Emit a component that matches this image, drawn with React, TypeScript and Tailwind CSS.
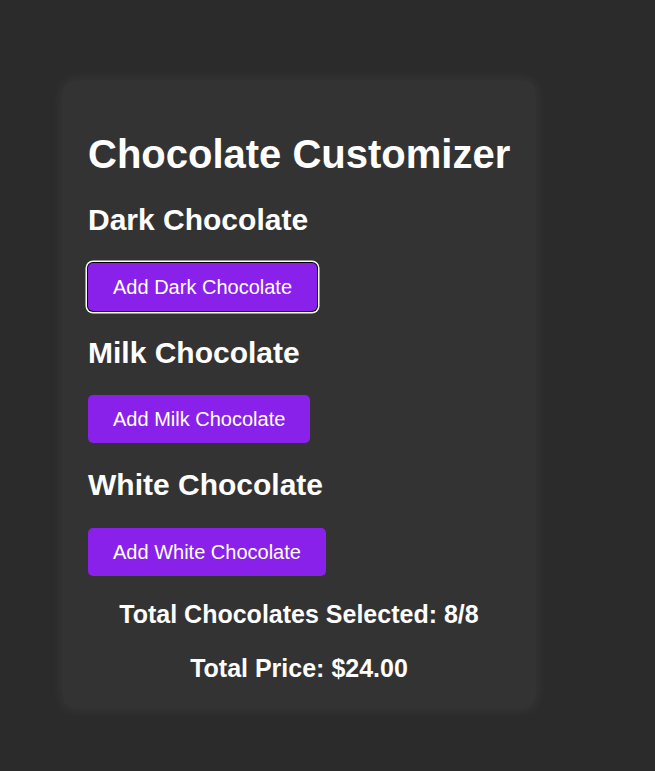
import { useState } from "react";

type Kind = { id: string; name: string };

const kinds: Kind[] = [
  { id: "dark", name: "Dark" },
  { id: "milk", name: "Milk" },
  { id: "white", name: "White" },
];

export default function App() {
  const [count, setCount] = useState(8);
  const max = 8;
  const price = 3;

  return (
    <main
      className="min-h-[771px] bg-[#2b2b2b] pl-[63px] pt-[81px] text-white"
      style={{ fontFamily: '"Liberation Sans", Arial, sans-serif' }}
    >
      <div className="w-[472px] rounded-[10px] bg-[#333333] px-[25px] pt-[23px] pb-[1px] shadow-[0_0_14px_rgba(255,255,255,0.08)]">
        <h1 className="mt-[27px] mb-[26px] whitespace-nowrap text-[40px] leading-[46px] font-bold">
          Chocolate Customizer
        </h1>

        {kinds.map((k, i) => (
          <div key={k.id}>
            <h2 className="mt-[25px] mb-[25px] text-[30px] leading-[34.5px] font-bold">
              {k.name} Chocolate
            </h2>
            <button
              type="button"
              onClick={() => setCount((c) => Math.min(max, c + 1))}
              className={
                i === 0
                  ? "rounded-[5px] bg-[#8a21ea] px-[25px] py-3 text-[20px] leading-[24px] text-white shadow-[0_0_0_1px_#000,0_0_0_2.5px_#fff]"
                  : "rounded-[5px] bg-[#8a21ea] px-[25px] py-3 text-[20px] leading-[24px] text-white"
              }
            >
              Add {k.name} Chocolate
            </button>
          </div>
        ))}

        <p className="mt-[24px] text-center text-[25px] leading-[28.75px] font-bold">
          Total Chocolates Selected: {count}/{max}
        </p>
        <p className="mt-[26px] mb-[24px] text-center text-[25px] leading-[28.75px] font-bold">
          Total Price: ${(count * price).toFixed(2)}
        </p>
      </div>
    </main>
  );
}
